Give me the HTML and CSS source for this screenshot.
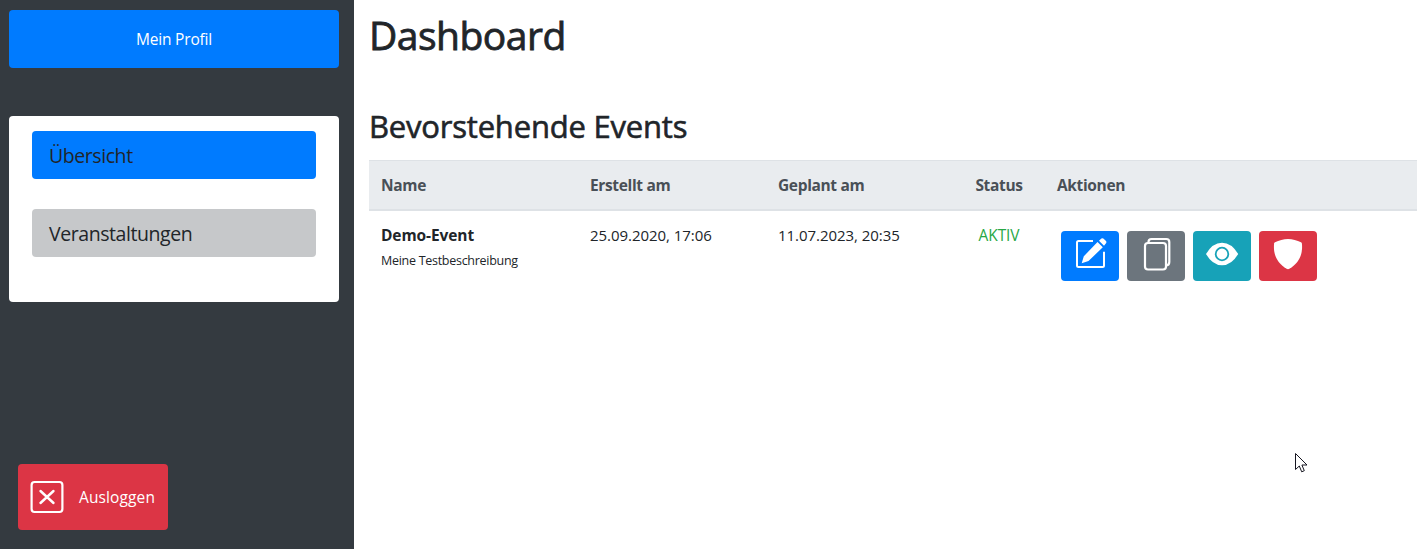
FILE: index.html
```html
<!DOCTYPE html>
<html lang="de">
<head>
<meta charset="utf-8">
<title>Dashboard</title>
<link rel="stylesheet" href="styles.css">
</head>
<body>
<div class="layout">
  <aside class="sidebar">
    <a class="profile"><span>Mein Profil</span></a>
    <nav class="menu">
      <a class="menu-item active"><span class="overview">Übersicht</span></a>
      <a class="menu-item"><span class="events">Veranstaltungen</span></a>
    </nav>
    <a class="logout">
      <svg width="34" height="34" viewBox="0 0 34 34" fill="none" stroke="#fff" stroke-linecap="round"><rect x="1.6" y="2" width="30.8" height="30" rx="3" stroke-width="2.2"/><path d="M10.500 11 23.500 23M23.500 11 10.500 23" stroke-width="2.400"/></svg>
      <span>Ausloggen</span>
    </a>
  </aside>
  <main class="content">
    <h1><span>Dashboard</span></h1>
    <h2><span>Bevorstehende Events</span></h2>
    <table class="table">
      <colgroup><col class="c-name"><col class="c-created"><col class="c-planned"><col class="c-status"><col></colgroup>
      <thead><tr><th><span class="t-name">Name</span></th><th><span class="t-created">Erstellt am</span></th><th><span class="t-planned">Geplant am</span></th><th class="center"><span class="t-status">Status</span></th><th><span class="t-actions">Aktionen</span></th></tr></thead>
      <tbody><tr>
        <td><b class="event-name">Demo-Event</b><br><small>Meine Testbeschreibung</small></td>
        <td><span class="date">25.09.2020, 17:06</span></td>
        <td><span class="date">11.07.2023, 20:35</span></td>
        <td class="center"><span class="status">AKTIV</span></td>
        <td><div class="actions">
          <a class="btn blue"><svg viewBox="0 0 58 50"><path d="M32 10H17.500Q16 10 16 11.500V34.500Q16 36 17.500 36H41.500Q43 36 43 34.500V20.700" fill="none" stroke="#fff" stroke-width="2"/><path d="M36.500 11 41.800 16.300 27.500 30 20.700 32.300 22.800 25.300ZM38 9.700 40.400 7.600Q41.900 6.900 42.900 7.900L45 10Q45.800 11.200 45 12.200L43 14.700Z" fill="#fff"/></svg></a>
          <a class="btn gray"><svg viewBox="0 0 58 50" fill="none" stroke="#fff" stroke-width="2.200"><rect x="18" y="12" width="21" height="26.500" rx="3"/><path d="M21.500 12V11Q21.500 8 24.500 8H39.300Q42.300 8 42.300 11V31Q42.300 34.500 38.700 34.500"/></svg></a>
          <a class="btn teal"><svg viewBox="0 0 58 50"><path d="M13 23Q19.500 11.700 29 11.700T45.200 23Q38.500 34.300 29 34.300T13 23Z" fill="#fff"/><circle cx="29" cy="23" r="6.300" fill="none" stroke="#17a2b8" stroke-width="1.800"/></svg></a>
          <a class="btn red"><svg viewBox="0 0 58 50"><path d="M29 8C33.500 8 38 9.500 42 11.200Q42.800 11.600 42.900 12.500C43.900 22.500 41 31.200 30.400 37.800Q29 38.600 27.600 37.800C17 31.200 14.100 22.500 15.100 12.500Q15.200 11.600 16 11.200C20 9.500 24.500 8 29 8Z" fill="#fff"/></svg></a>
        </div></td>
      </tr></tbody>
    </table>
  </main>
</div>
<svg class="cursor" width="14" height="21" viewBox="0 0 14 21"><path d="M1.500 1.500V17.500L5.300 14 7.700 19.800 10.300 18.700 7.900 13H13Z" fill="#fff" stroke="#151520"/></svg>
</body>
</html>
```
FILE: styles.css
```css
* { box-sizing: border-box; }
body { margin: 0; background: #fff; color: #212529; font: 16px/24px "Open Sans", "Noto Sans", sans-serif; overflow: hidden; }
span, small, b { white-space: nowrap; }
.layout { display: flex; height: 549px; }
.sidebar { width: 354px; flex: none; background: #343a40; padding: 10px 15px 19px 9px; display: flex; flex-direction: column; }
.profile { height: 58px; border-radius: 4px; background: #007bff; color: #fff; font-size: 15.500px; line-height: 26px; display: flex; align-items: center; justify-content: center; letter-spacing: -.2px; }
.menu { margin-top: 48px; height: 186px; background: #fff; border-radius: 4px; padding: 15px 23px; display: flex; flex-direction: column; gap: 30px; }
.menu-item { height: 48px; border-radius: 4px; background: #c6c8ca; padding: 0 17px; font-size: 19.500px; line-height: 49px; letter-spacing: -.43px; }
.menu-item.active { background: #007bff; }
.logout { margin: auto 0 0 9px; width: 150px; height: 66px; border-radius: 4px; background: #dc3545; color: #fff; font-size: 15.500px; display: flex; align-items: center; padding-left: 12px; gap: 15px; letter-spacing: .12px; }
.content { flex: 1; padding: 11px 0 0 15px; }
h1, h2 { margin: 0; font-weight: 500; }
h1 { font-size: 39px; line-height: 48px; letter-spacing: -.5px; -webkit-text-stroke: .8px #212529; }
h2 { margin-top: 48px; font-size: 31px; line-height: 38px; letter-spacing: -.2px; -webkit-text-stroke: .6px #212529; }
.table { width: 1048px; margin-top: 15px; table-layout: fixed; border-collapse: separate; border-spacing: 0; }
.c-name { width: 209px; }
.c-created { width: 188px; }
.c-planned { width: 186px; }
.c-status { width: 94px; }
th { height: 51px; padding: 0 12px; text-align: left; color: #495057; background: #e9ecef; border-top: 1px solid #dee2e6; border-bottom: 2px solid #dee2e6; font-size: 15.500px; line-height: 26px; letter-spacing: -.35px; }
td { padding: 12px; vertical-align: top; }
th:last-child, td:last-child { padding-left: 11px; }
.table .center { text-align: center; }
.event-name { font-size: 15.500px; letter-spacing: -.1px; }
small { font-size: 12.500px; letter-spacing: -.28px; }
.date { font-size: 15px; letter-spacing: -.04px; }
.status { color: #28a745; font-size: 15.500px; letter-spacing: -.1px; }
.actions { display: flex; gap: 8px; padding: 8px 0 0 4px; }
.btn { width: 58px; height: 50px; border-radius: 4px; }
.btn svg { display: block; width: 58px; height: 50px; }
.blue { background: #007bff; }
.gray { background: #6c757d; }
.teal { background: #17a2b8; }
.red { background: #dc3545; }
.cursor { position: absolute; left: 1294px; top: 452px; }
```
